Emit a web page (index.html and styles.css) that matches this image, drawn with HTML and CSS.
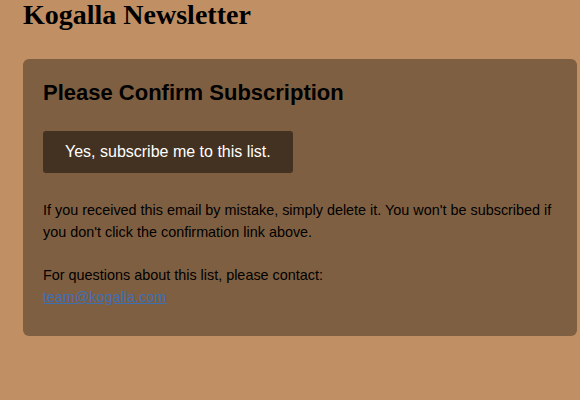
FILE: index.html
```html
<!DOCTYPE html>
<html>
<head>
<meta charset="utf-8">
<link rel="stylesheet" href="styles.css">
</head>
<body>
<h1 class="brand">Kogalla Newsletter</h1>
<div class="card">
  <h2 class="card-title">Please Confirm Subscription</h2>
  <div class="actions"><a class="btn" href="#">Yes, subscribe me to this list.</a></div>
  <p class="note first">If you received this email by mistake, simply delete it. You won't be subscribed if you don't click the confirmation link above.</p>
  <p class="note">For questions about this list, please contact:<br><a class="mail" href="#">team@kogalla.com</a></p>
</div>
</body>
</html>
```
FILE: styles.css
```css
html, body {
  margin: 0;
  background: #c08f63;
}
body {
  padding: 0 3px 0 23px;
}
.brand {
  font-family: "Liberation Serif", serif;
  font-weight: bold;
  font-size: 28px;
  line-height: 30px;
  margin: 0 0 29px 0;
  color: #000;
}
.card {
  background: #7f5f41;
  border-radius: 6px;
  padding: 21px 20px 28px 20px;
  font-family: "Liberation Sans", Arial, sans-serif;
  color: #000;
}
.card-title {
  font-size: 22px;
  font-weight: bold;
  margin: 0 0 25px 0;
  line-height: 26px;
}
.actions {
  display: flex;
}
.btn {
  display: block;
  background: #433222;
  color: #fff;
  text-decoration: none;
  font-size: 16px;
  line-height: 42px;
  padding: 0 22px;
  border-radius: 3px;
}
.note {
  font-size: 14.4px;
  line-height: 22px;
  margin: 21px 0 0 0;
}
.note.first {
  margin-top: 26px;
}
.mail {
  color: #3d6fb3;
  text-decoration: underline;
}
```
